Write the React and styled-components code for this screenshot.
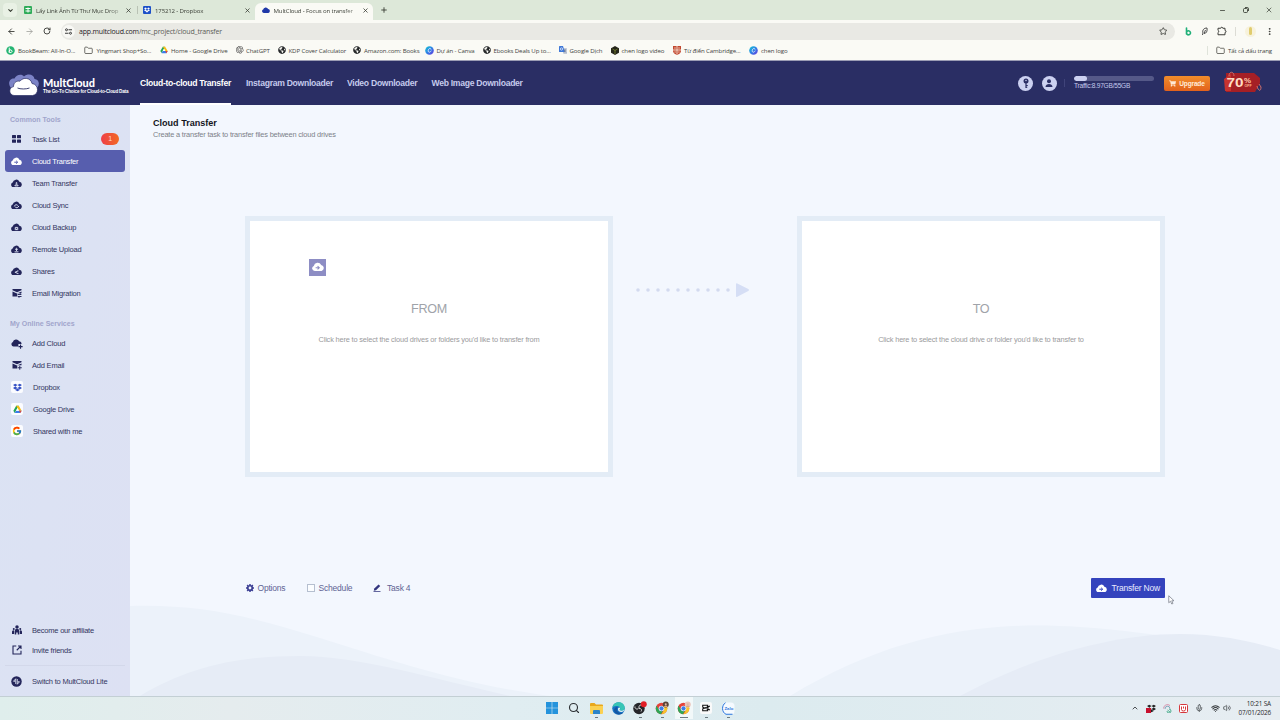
import React from "react";
import styled, { createGlobalStyle } from "styled-components";
import {
    ArrowLeft,
    ArrowRight,
    ChevronDown,
    ChevronUp,
    Folder,
    Mic,
    Minus,
    Plus,
    RotateCw,
    Search,
    Star,
    Volume2,
    Wifi,
    X,
    EllipsisVertical,
} from "lucide-react";
import { FaDropbox, FaGlobeAmericas, FaShoppingCart } from "react-icons/fa";
import { FcGoogle } from "react-icons/fc";
import { SiOpenai } from "react-icons/si";

const ui = `"Open Sans", "Noto Sans", sans-serif`;
const arial = `"Liberation Sans", Arial, sans-serif`;

/* ---------- small drawings ---------- */

const Drive = ({ size = 8 }) => (
    <svg width={size} height={size} viewBox="0 0 24 24">
        <path d="M8.5 2h7L12 8.2 4.6 21 1 15z" fill="#23a55a" />
        <path d="M8.5 2h7L23 15h-7z" fill="#f9bc15" />
        <path d="M8.2 15H23l-3.6 6.5H4.6z" fill="#3b7de9" />
        <path d="M16 15h7l-3.6 6.5z" fill="#e5453a" />
        <path d="M12 8.2 8.2 15h7.8z" fill="#fff" />
    </svg>
);

const Canva = () => (
    <svg width="9" height="9" viewBox="0 0 18 18">
        <defs>
            <linearGradient id="canva" x1="0" y1="0" x2="1" y2="1">
                <stop offset="0" stopColor="#13c9d3" />
                <stop offset=".5" stopColor="#2f80e6" />
                <stop offset="1" stopColor="#6a35dd" />
            </linearGradient>
        </defs>
        <circle cx="9" cy="9" r="8.6" fill="url(#canva)" />
        <path
            d="M12 6.3c-.3-2-3.2-2.1-4.7.2-1.6 2.5-1.1 5.7 1.1 5.9 1.7.1 2.9-1 3.7-2.4"
            fill="none"
            stroke="#fff"
            strokeWidth="1.5"
            strokeLinecap="round"
        />
    </svg>
);

const Beam = () => (
    <svg width="9" height="9" viewBox="0 0 18 18">
        <circle cx="9" cy="9" r="8.5" fill="#25b573" />
        <path
            d="M6.5 4v9M6.5 9.5a2.8 2.8 0 1 1 0 2"
            fill="none"
            stroke="#fff"
            strokeWidth="2"
            strokeLinecap="round"
        />
    </svg>
);

const BeamMark = () => (
    <svg width="7" height="9" viewBox="0 0 14 18">
        <path
            d="M3 2v12M3 11.5a4 4 0 1 1 1 2.8"
            fill="none"
            stroke="#20b078"
            strokeWidth="3.2"
            strokeLinecap="round"
        />
    </svg>
);

const Puzzle = () => (
    <svg width="10" height="10" viewBox="0 0 20 20" fill="none" stroke="#3c3d39" strokeWidth="2">
        <path d="M2 4.5h5.5a2 2 0 0 1 4 0H16V9a2 2 0 0 1 0 4v4.5H2V13a2.3 2.3 0 0 0 0-4.3z" />
    </svg>
);

const Restore = () => (
    <svg width="6" height="6" viewBox="0 0 12 12" fill="none" stroke="#33382f" strokeWidth="1.7">
        <rect x="1" y="3" width="8" height="8" rx="2" />
        <path d="M4 1h4.5Q11 1 11 3.5V8" />
    </svg>
);

const Translate = () => (
    <svg width="8" height="8" viewBox="0 0 16 16">
        <path d="M6 4h9a1 1 0 0 1 1 1v10a1 1 0 0 1-1 1H9z" fill="#c4cbd8" />
        <path d="M1 0h7l3.5 12H1a1 1 0 0 1-1-1V1a1 1 0 0 1 1-1z" fill="#3f78d8" />
        <circle cx="5" cy="6" r="2.3" fill="none" stroke="#fff" strokeWidth="1.3" />
        <path d="M10 8h4M12 7v1c0 2-1 4-2 5M11 9l3 4" stroke="#55657f" fill="none" />
    </svg>
);

const Cube = () => (
    <svg width="8" height="9" viewBox="0 0 16 18">
        <path d="M8 0l8 4.5v9L8 18l-8-4.5v-9z" fill="#26261a" />
        <path d="M8 9v7M8 9L3 6M8 9l5-3" stroke="#7f8c32" strokeWidth="1.5" />
    </svg>
);

const Shield = () => (
    <svg width="8" height="9" viewBox="0 0 16 18">
        <path d="M0 0h16v10c0 4-4 6.5-8 8-4-1.5-8-4-8-8z" fill="#c2472f" />
        <path
            d="M8 0v17M0 8h16M2.5 4h3M10.5 4h3M3 12h2.5M10.5 12H13"
            stroke="#f3ddd0"
            strokeWidth="1.9"
        />
    </svg>
);

const cloudPath = "M4.6 15A4.4 4.4 0 0 1 3 6.5 6.5 6.5 0 0 1 15.3 4.9 5.2 5.2 0 0 1 16 15z";

const cloudGlyphs = {
    arrow: <path d="M6 9.5h6M9.3 6.8l2.8 2.7-2.8 2.7" />,
    team: (
        <>
            <circle cx="10" cy="7.5" r="1" />
            <path d="M7 12.5c0-3 6-3 6 0z" />
        </>
    ),
    sync: <path d="M6 10c.5-3.5 4.3-4 6.3-2M14 9c-.5 3.5-4.3 4-6.3 2" />,
    backup: <path d="M7.8 13V8h4.4v5M10 13v-2.5" />,
    upload: <path d="M10 10.8V6.5M7.5 8.4L10 6l2.500 2.400M6.500 12.500h7" />,
    share: <path d="M12.5 7.2L7.8 9.6l4.7 2.3M7 9.600h1.500M12 7.200h1.500M12 12h1.500" />,
};

const CloudIcon = ({ glyph, color = "#23255a", hole = "#dde2f3", size = 11 }) => (
    <svg width={size} height={size * 0.8} viewBox="0 0 20 16">
        <path d={cloudPath} fill={color} />
        <g fill="none" stroke={hole} strokeWidth="1.8">
            {cloudGlyphs[glyph]}
        </g>
    </svg>
);

const GridIcon = () => (
    <svg width="9" height="8" viewBox="0 0 18 16" fill="#23255a">
        <rect width="8" height="6.6" rx="1" />
        <rect x="10" width="8" height="6.6" rx="1" />
        <rect y="8.8" width="8" height="6.6" rx="1" />
        <rect x="10" y="8.8" width="8" height="6.6" rx="1" />
    </svg>
);

const AddCloudIcon = () => (
    <svg width="12" height="11" viewBox="0 0 22 20">
        <path
            d="M4.6 15.5A4.2 4.2 0 0 1 3.4 7.4 6.2 6.2 0 0 1 15 6a5 5 0 0 1 4.5 5h-6v4.5z"
            fill="#23255a"
        />
        <path d="M17.5 12v7.5M13.8 15.8h7.5" stroke="#23255a" strokeWidth="2" />
    </svg>
);

const MailIcon = ({ plus }) => (
    <svg width="10" height="10" viewBox="0 0 20 20">
        <path d="M1 2h18v2.500L10 8.500 1 4.500zM1 6.800l9 4 9-4v3.500h-8.500v6.500H1z" fill="#23255a" />
        <path
            d={plus ? "M15.5 11.500v8M11.500 15.500h8" : "M11.500 13H18M12 17h7M16 10.500l2.500 2.500M14.500 19.500L12 17"}
            stroke="#23255a"
            strokeWidth="1.9"
        />
    </svg>
);

const PeopleIcon = () => (
    <svg width="10" height="10" viewBox="0 0 20 20" fill="#23255a">
        <circle cx="10" cy="4" r="3.5" />
        <circle cx="3.5" cy="7.8" r="2" />
        <circle cx="16.5" cy="7.8" r="2" />
        <path d="M5.5 19v-7a4.500 4.500 0 0 1 9 0v7h-3v-4h-3v4zM0 18v-4.500a3 3 0 0 1 4.300-2.600V18zM20 18v-4.500a3 3 0 0 0-4.300-2.600V18z" />
    </svg>
);

const InviteIcon = () => (
    <svg width="10" height="10" viewBox="0 0 20 20" fill="none" stroke="#23255a" strokeWidth="2.2">
        <path d="M8.5 2H2v16h16v-6.5M12 2h6v6M18 2L9.5 10.5" />
    </svg>
);

const SwitchIcon = () => (
    <svg width="11" height="11" viewBox="0 0 22 22">
        <circle cx="11" cy="11" r="10.5" fill="#23255a" />
        <path
            d="M9.5 16V5.5L5 10.5h3.5M12.5 6v10.5l4.500-5h-3.500"
            fill="none"
            stroke="#dde2f3"
            strokeWidth="1.8"
        />
    </svg>
);

const Logo = () => (
    <svg width="32" height="23" viewBox="0 0 32 23">
        <path
            d="M3 14C-1 9 2 4 6.5 4.5 8 .5 14-.5 16 2.5 20-1 26 .5 26.5 5c4.5.5 5.5 5 3 8.5z"
            fill="#7c83c6"
        />
        <path
            d="M6 21.5C.5 21 .5 13.5 5.5 12.6 5.5 8 9.5 6.5 12 7.2c3-4.500 11-3.500 12 2.300 7 .8 7.500 11.300.5 12z"
            fill="#fff"
            stroke="#2a2e64"
            strokeWidth=".7"
        />
        <path d="M9.5 14c2.5 1.3 9 1.3 12 0" stroke="#2a2e64" strokeWidth=".9" fill="none" />
    </svg>
);

const SaleTag = () => (
    <svg width="40" height="24" viewBox="0 0 40 24">
        <path d="M3 2h28l6 5v5l-5 9H3z" fill="#a51f25" />
        <path d="M1 8l7-5v17H2z" fill="#c7332f" />
        <path d="M6 5c0-5 5-5 5 0M34 15c1 5 4 6 4 1l-2-3" fill="none" stroke="#cf706c" />
        <text
            x="3.5"
            y="16"
            fontFamily="Liberation Sans"
            fontWeight="700"
            fontSize="13.5"
            textLength="17"
            lengthAdjust="spacingAndGlyphs"
            fill="#ffdcc4"
        >
            70
        </text>
        <text x="21" y="11.5" fontFamily="Liberation Sans" fontWeight="700" fontSize="8" fill="#ffc9a8">
            %
        </text>
        <text x="21.5" y="16" fontFamily="Liberation Sans" fontWeight="700" fontSize="3.6" fill="#ffb98f">
            OFF
        </text>
    </svg>
);

const Chrome = ({ head }) => (
    <svg width="14" height="14" viewBox="0 0 28 28">
        <circle cx="13" cy="15" r="11.5" fill="#e5423a" />
        <path d="M3 9.5a11.5 11.5 0 0 0 9 17l5-9-8.5.5z" fill="#2fa556" />
        <path d="M13 26.5A11.5 11.5 0 0 0 23.5 10H13l5 8z" fill="#f7c52a" />
        <circle cx="13" cy="15" r="5.6" fill="#fff" />
        <circle cx="13" cy="15" r="4.3" fill="#3d7ee6" />
        <circle cx="21.5" cy="7" r="6" fill={head} />
        <path d="M18 12c0-4 7-4 7 0z" fill="#d6a88b" />
        <circle cx="21.5" cy="6.5" r="2" fill="#dfb9a0" />
    </svg>
);

const Pointer = styled.svg`
    position: absolute;
    left: 1168px;
    top: 595px;
`;

/* ---------- browser chrome ---------- */

const bookmarks = [
    { w: 78, icon: <Beam />, label: "BookBeam: All-In-O..." },
    { w: 76, gap: 3.5, icon: <Folder size={9} color="#44443f" />, label: "Yingmart Shop+So..." },
    { w: 76, icon: <Drive />, label: "Home - Google Drive" },
    { w: 42, gap: 2.5, icon: <SiOpenai size={7.5} color="#444" />, label: "ChatGPT" },
    { w: 75, gap: 2.5, icon: <FaGlobeAmericas size={8} color="#26282a" />, label: "KDP Cover Calculator" },
    { w: 72, icon: <FaGlobeAmericas size={8} color="#26282a" />, label: "Amazon.com: Books" },
    { w: 57.5, gap: 2.5, icon: <Canva />, label: "Dự án - Canva" },
    { w: 76, icon: <FaGlobeAmericas size={8} color="#26282a" />, label: "Ebooks Deals Up to..." },
    { w: 52, icon: <Translate />, label: "Google Dịch" },
    { w: 62.5, icon: <Cube />, label: "chen logo video" },
    { w: 76, icon: <Shield />, label: "Từ điển Cambridge..." },
    { w: 60, icon: <Canva />, label: "chen logo" },
];

function Browser() {
    return (
        <header>
            <TabStrip>
                <TabSearch>
                    <ChevronDown size={7} strokeWidth={3.5} />
                </TabSearch>
                <Tab $w={119}>
                    <svg width="8" height="8" viewBox="0 0 16 16">
                        <rect width="16" height="16" rx="2" fill="#2eab58" />
                        <path d="M3 5h10M3 10h10M8 3v10" stroke="#fff" strokeWidth="2" />
                    </svg>
                    <TabTitle>Lấy Link Ảnh Từ Thư Mục Drop</TabTitle>
                    <X size={7} strokeWidth={2.6} />
                </Tab>
                <Tab $w={119} $line>
                    <DropboxTile>
                        <FaDropbox size={6} />
                    </DropboxTile>
                    <TabTitle>175212 - Dropbox</TabTitle>
                    <X size={7} strokeWidth={2.6} />
                </Tab>
                <Tab $w={118} $active>
                    <svg width="8" height="6" viewBox="0 0 20 15">
                        <path d={cloudPath} fill="#2038a8" />
                    </svg>
                    <TabTitle>MultCloud - Focus on transfer</TabTitle>
                    <X size={7} strokeWidth={2.6} />
                </Tab>
                <NewTab>
                    <Plus size={8} strokeWidth={2.6} />
                </NewTab>
                <WindowButtons>
                    <Minus size={7} strokeWidth={2.6} />
                    <Restore />
                    <X size={8} />
                </WindowButtons>
            </TabStrip>
            <Toolbar>
                <ToolSlot $w={22}>
                    <ArrowLeft size={9} strokeWidth={2.4} />
                </ToolSlot>
                <ToolSlot $w={14} $dim>
                    <ArrowRight size={9} />
                </ToolSlot>
                <ToolSlot $w={22}>
                    <RotateCw size={8} strokeWidth={2.8} />
                </ToolSlot>
                <Address>
                    <SiteInfo>
                        <svg width="7" height="7" viewBox="0 0 14 14" fill="none" stroke="#333" strokeWidth="1.9">
                            <circle cx="3" cy="3.5" r="2" />
                            <path d="M7 3.5h7M0 10.5h7" />
                            <circle cx="11" cy="10.5" r="2" />
                        </svg>
                    </SiteInfo>
                    <Url>
                        <b>app.multcloud.com</b>/mc_project/cloud_transfer
                    </Url>
                    <Star size={8.5} strokeWidth={2.4} />
                </Address>
                <Extensions>
                    <BeamMark />
                    <svg width="7" height="9" viewBox="0 0 14 18" fill="none" stroke="#444" strokeWidth="1.9">
                        <path d="M3 16c0-2 .5-3 1-4-2-6 2-10 8-10 1 6-1 11-6 11l3-7" />
                    </svg>
                    <Puzzle />
                    <Divider $h={9} />
                    <Avatar>
                        <i />
                    </Avatar>
                    <EllipsisVertical size={9} strokeWidth={2.6} />
                </Extensions>
            </Toolbar>
            <Bookmarks>
                {bookmarks.map((b, i) => (
                    <Bookmark key={i} $w={b.w} $gap={b.gap}>
                        {b.icon}
                        <span>{b.label}</span>
                    </Bookmark>
                ))}
                <AllBookmarks>
                    <Folder size={9} color="#44443f" />
                    <span>Tất cả dấu trang</span>
                </AllBookmarks>
            </Bookmarks>
        </header>
    );
}

/* ---------- MultCloud ---------- */

function TopNav() {
    return (
        <Nav>
            <Brand>
                <Logo />
                <div>
                    <h1>MultCloud</h1>
                    <p>The Go-To Choice for Cloud-to-Cloud Data</p>
                </div>
            </Brand>
            <NavLink $w={91} $active>
                Cloud-to-cloud Transfer
            </NavLink>
            <NavLink $w={86}>Instagram Downloader</NavLink>
            <NavLink $w={69.5}>Video Downloader</NavLink>
            <NavLink $w={91}>Web Image Downloader</NavLink>
            <NavRight>
                <RoundButton>
                    <svg width="8" height="11" viewBox="0 0 16 22">
                        <circle cx="8" cy="6" r="5" fill="#2a2e64" />
                        <path d="M8 9v11M8 15h3.5M8 18.5h2.5" stroke="#2a2e64" strokeWidth="2.4" />
                        <circle cx="8" cy="4.8" r="1.5" fill="#ccd1f1" />
                    </svg>
                </RoundButton>
                <RoundButton>
                    <svg width="8" height="9" viewBox="0 0 16 18" fill="#2a2e64">
                        <circle cx="8" cy="4.5" r="4" />
                        <path d="M1 16c0-8 14-8 14 0z" />
                    </svg>
                </RoundButton>
                <Traffic>
                    <Bar>
                        <div style={{ width: `${(8.97 / 55) * 100}%` }} />
                    </Bar>
                    <span>Traffic:8.97GB/55GB</span>
                </Traffic>
                <Upgrade>
                    <FaShoppingCart size={7} />
                    Upgrade
                </Upgrade>
                <SaleTag />
            </NavRight>
        </Nav>
    );
}

const tools = [
    { icon: <GridIcon />, label: "Task List", badge: 1 },
    { icon: <CloudIcon glyph="arrow" color="#fff" hole="#575eae" />, label: "Cloud Transfer", active: true },
    { icon: <CloudIcon glyph="team" />, label: "Team Transfer" },
    { icon: <CloudIcon glyph="sync" />, label: "Cloud Sync" },
    { icon: <CloudIcon glyph="backup" />, label: "Cloud Backup" },
    { icon: <CloudIcon glyph="upload" />, label: "Remote Upload" },
    { icon: <CloudIcon glyph="share" />, label: "Shares" },
    { icon: <MailIcon />, label: "Email Migration" },
];

function Sidebar() {
    return (
        <Side>
            <Group>Common Tools</Group>
            {tools.map((t) => (
                <SideItem key={t.label} $active={t.active}>
                    <IconSlot>{t.icon}</IconSlot>
                    {t.label}
                    {t.badge && <Badge>{t.badge}</Badge>}
                </SideItem>
            ))}
            <Group $second>My Online Services</Group>
            <SideItem>
                <IconSlot>
                    <AddCloudIcon />
                </IconSlot>
                Add Cloud
            </SideItem>
            <SideItem>
                <IconSlot>
                    <MailIcon plus />
                </IconSlot>
                Add Email
            </SideItem>
            <SideItem $service>
                <Tile>
                    <FaDropbox size={9} color="#3450c4" />
                </Tile>
                Dropbox
            </SideItem>
            <SideItem $service>
                <Tile>
                    <Drive size={9} />
                </Tile>
                Google Drive
            </SideItem>
            <SideItem $service>
                <Tile>
                    <FcGoogle size={10} />
                </Tile>
                Shared with me
            </SideItem>
            <SideFoot>
                <SideItem $h={20}>
                    <IconSlot>
                        <PeopleIcon />
                    </IconSlot>
                    Become our affiliate
                </SideItem>
                <SideItem $h={20}>
                    <IconSlot>
                        <InviteIcon />
                    </IconSlot>
                    Invite friends
                </SideItem>
                <hr />
                <SideItem $h={30}>
                    <IconSlot>
                        <SwitchIcon />
                    </IconSlot>
                    Switch to MultCloud Lite
                </SideItem>
            </SideFoot>
        </Side>
    );
}

function Transfer() {
    return (
        <Main>
            <Waves width="1150" height="100" viewBox="0 0 1150 100">
                <path d="M0 10C70 8 120 20 190 42S330 88 420 100H0z" fill="#ecf2fa" />
                <path d="M660 100C760 40 850 24 950 31s150 22 200 32v37z" fill="#ecf2fa" />
                <path d="M10 100C60 70 110 60 170 60s130 22 210 40z" fill="#e6ecf6" />
                <path d="M830 100c70-38 150-62 220-62 40 0 75 8 100 16v46z" fill="#e6ecf6" />
            </Waves>
            <PageTitle>Cloud Transfer</PageTitle>
            <PageSub>Create a transfer task to transfer files between cloud drives</PageSub>
            <Panels>
                <Panel>
                    <h3>FROM</h3>
                    <p>Click here to select the cloud drives or folders you'd like to transfer from</p>
                    <DragIcon>
                        <CloudIcon glyph="arrow" color="#fff" hole="#8d8dc4" size={12} />
                    </DragIcon>
                </Panel>
                <Flow width="113" height="16" viewBox="0 0 113 16">
                    {Array.from({ length: 10 }, (_, i) => (
                        <circle key={i} cx={2 + i * 10} cy="8" r="1.8" fill="#d3daef" />
                    ))}
                    <path d="M100 2.2q0-1.5 1.3-.8l11 5.500q1.400 1 0 2l-11 5.900q-1.300.6-1.300-.8z" fill="#d5def5" />
                </Flow>
                <Panel>
                    <h3>TO</h3>
                    <p>Click here to select the cloud drive or folder you'd like to transfer to</p>
                </Panel>
            </Panels>
            <Actions>
                <Action $w={61}>
                    <svg width="8" height="8" viewBox="0 0 16 16">
                        <circle cx="8" cy="8" r="4.5" fill="none" stroke="#3c3f94" strokeWidth="3.4" />
                        <path
                            d="M8 0v3M8 13v3M0 8h3M13 8h3M2.3 2.3l2 2M11.7 11.7l2 2M2.3 13.7l2-2M11.7 4.3l2-2"
                            stroke="#3c3f94"
                            strokeWidth="3"
                        />
                    </svg>
                    Options
                </Action>
                <Action $w={66}>
                    <Check />
                    Schedule
                </Action>
                <Action $w={60} $gap={6}>
                    <svg width="8" height="8" viewBox="0 0 16 16">
                        <path d="M1.5 13.5l1-4.5L11 .8 14.5 4 6 12.500z" fill="#33357e" />
                        <path d="M1 15h14" stroke="#33357e" strokeWidth="1.5" />
                    </svg>
                    Task 4
                </Action>
                <TransferNow>
                    <CloudIcon glyph="arrow" color="#fff" hole="#3443bd" size={11} />
                    Transfer Now
                </TransferNow>
            </Actions>
        </Main>
    );
}

/* ---------- Windows taskbar ---------- */

function Taskbar() {
    return (
        <Task>
            <Apps>
                <TaskIcon>
                    <svg width="12" height="12" viewBox="0 0 24 24" fill="#2493dc">
                        <path d="M0 0h11.4v11.4H0zM12.6 0H24v11.4H12.6zM0 12.6h11.4V24H0zM12.6 12.6H24V24H12.6z" />
                    </svg>
                </TaskIcon>
                <TaskIcon>
                    <Search size={12} color="#2b2f33" strokeWidth={2.3} />
                </TaskIcon>
                <TaskIcon $open>
                    <svg width="13" height="11" viewBox="0 0 26 22">
                        <path d="M0 2q0-2 2-2h7l3 3h12q2 0 2 2v14H0z" fill="#e9a81c" />
                        <path d="M0 6h26v14q0 2-2 2H2q-2 0-2-2z" fill="#fbd151" />
                        <path d="M6 22v-6q0-2 2-2h10q2 0 2 2v6z" fill="#2a84c9" />
                    </svg>
                </TaskIcon>
                <TaskIcon>
                    <svg width="13" height="13" viewBox="0 0 26 26">
                        <circle cx="13" cy="13" r="12.5" fill="#1673c5" />
                        <path d="M1 11C3-3 25-3 25.5 12c0 6-8 7-10 4 3-5-2-9-7-8-4 0-7 2-7.5 3z" fill="#37c5b5" />
                        <path d="M10 13c-2 7 6 11 13 8-5 6-17 5-19-4 0-5 4-8 8-7-1 .5-2 1.5-2 3z" fill="#1457a3" />
                        <path d="M15 16c3 3 8 1 10-1-1 3-3 5-6 5-5 0-8-3-7-7 1-2 3-3 4-1 .5 2-1 3-1 4z" fill="#e3f1f1" />
                    </svg>
                </TaskIcon>
                <TaskIcon $open>
                    <svg width="14" height="14" viewBox="0 0 28 28">
                        <circle cx="12" cy="15" r="11.5" fill="#25262a" />
                        <path
                            d="M12 14c-1-5 3-7 6-6M12 15c5-1 6 4 4 6M11 15c-4 3-8-1-7-4"
                            stroke="#ddd"
                            strokeWidth="2"
                            fill="none"
                        />
                        <circle cx="21.5" cy="6.5" r="6" fill="#e01e26" />
                    </svg>
                </TaskIcon>
                <TaskIcon $open>
                    <Chrome head="#5b4438" />
                </TaskIcon>
                <TaskIcon $open $current>
                    <Chrome head="#e9c5bb" />
                </TaskIcon>
                <TaskIcon $open>
                    <svg width="12" height="12" viewBox="0 0 22 22">
                        <rect width="22" height="22" rx="4" fill="#fafafa" />
                        <path
                            d="M18 7.5L14 10V6H5v3.5l13 5M18 14.5L14 12v4H5v-3.5l13-5"
                            fill="none"
                            stroke="#111"
                            strokeWidth="2"
                        />
                    </svg>
                </TaskIcon>
                <TaskIcon $open>
                    <svg width="13" height="13" viewBox="0 0 26 26">
                        <rect x="1" y="1" width="24" height="24" rx="7" fill="#f5faff" />
                        <path d="M7 1.5C-1 6-1 21 8 24.5h13" fill="none" stroke="#2774dc" strokeWidth="2" />
                        <text x="5" y="16" fontFamily="Liberation Sans" fontWeight="700" fontSize="8.5" fill="#2774dc">
                            Zalo
                        </text>
                    </svg>
                </TaskIcon>
            </Apps>
            <Tray>
                <TraySlot $w={16}>
                    <ChevronUp size={8} strokeWidth={2.6} />
                </TraySlot>
                <TraySlot $w={16}>
                    <FaDropbox size={9} color="#222" />
                    <TrayBadge />
                </TraySlot>
                <TraySlot $w={16}>
                    <svg width="9" height="9" viewBox="0 0 18 18" fill="none" strokeWidth="2">
                        <path d="M1 9a8 8 0 0 1 13-6" stroke="#d693ad" />
                        <path d="M4 10a5 5 0 0 1 10-1" stroke="#7fa6bb" />
                        <path d="M9 12l5 4M12 10a4 4 0 1 1-4 4" stroke="#4fae91" />
                    </svg>
                </TraySlot>
                <TraySlot $w={17}>
                    <svg width="9" height="9" viewBox="0 0 18 18">
                        <rect x="1" y="1" width="16" height="16" rx="2" fill="#fff" stroke="#d6373c" strokeWidth="2" />
                        <path d="M5 5v6q0 3 4 3t4-3V5M9 5v4" fill="none" stroke="#d6373c" strokeWidth="2" />
                    </svg>
                </TraySlot>
                <TraySlot $w={15}>
                    <Mic size={8.5} />
                </TraySlot>
                <TraySlot $w={16}>
                    <Wifi size={9} strokeWidth={2.8} />
                </TraySlot>
                <TraySlot $w={8}>
                    <Volume2 size={8} />
                </TraySlot>
                <Clock>
                    10:21 SA
                    <br />
                    07/01/2026
                </Clock>
            </Tray>
        </Task>
    );
}

export default function App() {
    return (
        <Screen>
            <Global />
            <Browser />
            <TopNav />
            <Body>
                <Sidebar />
                <Transfer />
            </Body>
            <Taskbar />
            <Pointer width="7" height="10" viewBox="0 0 14 20">
                <path
                    d="M1.5 1.5v14l3.5-3 2.5 5.5 2.5-1-2.5-5.5H12z"
                    fill="#fff"
                    stroke="#777c88"
                    strokeWidth="1.5"
                />
            </Pointer>
        </Screen>
    );
}

const Global = createGlobalStyle`
    * {
        box-sizing: border-box;
    }
    body {
        margin: 0;
        overflow: hidden;
    }
    svg {
        display: block;
        flex-shrink: 0;
    }
    h1, h2, h3, p {
        margin: 0;
    }
`;

const Screen = styled.div`
    width: 1280px;
    height: 720px;
    display: flex;
    flex-direction: column;
    position: relative;
    overflow: hidden;
    font-family: ${arial};
    white-space: nowrap;
`;

const TabStrip = styled.div`
    height: 20px;
    display: flex;
    align-items: flex-end;
    padding-left: 3px;
    background: #dde8d9;
    font-family: ${ui};
    color: #33382f;
`;

const TabSearch = styled.div`
    width: 14px;
    height: 14px;
    margin: 0 0 3px;
    display: flex;
    align-items: center;
    justify-content: center;
    border-radius: 4px;
    background: #e9f1e5;
`;

const Tab = styled.div`
    position: relative;
    width: ${(p) => p.$w}px;
    height: 17px;
    display: flex;
    align-items: center;
    padding: 0 0 3px ${(p) => (p.$active ? 6.5 : 7)}px;
    border-radius: 6px 6px 0 0;
    background: ${(p) => (p.$active ? "#fafaf5" : "transparent")};
    font-size: 6.1px;
    letter-spacing: -0.17px;
    &::before {
        content: "";
        display: ${(p) => (p.$line ? "block" : "none")};
        position: absolute;
        left: 1px;
        top: 3px;
        width: 1px;
        height: 8px;
        background: #b9c2b4;
    }
`;

const TabTitle = styled.span`
    width: 88.5px;
    margin-left: 4px;
    color: #3c4038;
    -webkit-mask-image: linear-gradient(to right, #000 80%, rgba(0, 0, 0, 0.25) 96%);
    mask-image: linear-gradient(to right, #000 80%, rgba(0, 0, 0, 0.25) 96%);
`;

const DropboxTile = styled.div`
    width: 8px;
    height: 8px;
    display: flex;
    align-items: center;
    justify-content: center;
    border-radius: 1px;
    background: #1d50c8;
    color: #fff;
`;

const NewTab = styled.div`
    padding: 0 0 6px 7px;
`;

const WindowButtons = styled.div`
    margin-left: auto;
    height: 20px;
    display: flex;
    align-items: center;
    gap: 16.5px;
    padding-right: 7px;
`;

const Toolbar = styled.div`
    height: 22px;
    display: flex;
    align-items: center;
    background: #fafaf5;
    color: #3c3d39;
    font-family: ${ui};
`;

const ToolSlot = styled.div`
    width: ${(p) => p.$w}px;
    display: flex;
    justify-content: center;
    opacity: ${(p) => (p.$dim ? 0.5 : 1)};
`;

const Address = styled.div`
    width: 1114px;
    height: 17px;
    margin-left: 3px;
    display: flex;
    align-items: center;
    padding: 0 8px 0 1px;
    border-radius: 9px;
    background: #e9e9e4;
    > svg {
        margin-left: auto;
    }
`;

const SiteInfo = styled.div`
    width: 13px;
    height: 13px;
    margin-right: 4px;
    display: flex;
    align-items: center;
    justify-content: center;
    border-radius: 50%;
    background: #f8f8f4;
`;

const Url = styled.span`
    font-size: 7px;
    letter-spacing: -0.19px;
    color: #5b5c57;
    b {
        font-weight: 400;
        color: #1f201d;
    }
`;

const Extensions = styled.div`
    flex: 1;
    display: flex;
    align-items: center;
    justify-content: space-between;
    padding: 0 6px 0 10px;
`;

const Divider = styled.div`
    width: 1px;
    height: ${(p) => p.$h}px;
    background: #dcdcd5;
`;

const Avatar = styled.div`
    width: 11px;
    height: 11px;
    display: flex;
    justify-content: center;
    align-items: center;
    border-radius: 50%;
    background: #f7f2dc;
    i {
        width: 3px;
        height: 8px;
        border-radius: 2px;
        background: #e0cc6e;
    }
`;

const Bookmarks = styled.div`
    height: 19px;
    display: flex;
    align-items: center;
    padding: 0 8px 2px 6px;
    background: #fafaf5;
    border-bottom: 1px solid #9b9db4;
    font-family: ${ui};
    font-size: 6.1px;
    letter-spacing: -0.12px;
    color: #44453f;
`;

const Bookmark = styled.div`
    width: ${(p) => p.$w}px;
    display: flex;
    align-items: center;
    gap: ${(p) => p.$gap || 3}px;
`;

const AllBookmarks = styled.div`
    margin-left: auto;
    display: flex;
    align-items: center;
    gap: 3px;
    padding-left: 8px;
    border-left: 1px solid #dfe3da;
`;

const Nav = styled.nav`
    height: 44px;
    display: flex;
    align-items: center;
    background: #2a2e64;
`;

const Brand = styled.div`
    width: 140px;
    display: flex;
    align-items: center;
    gap: 3px;
    padding: 5px 0 0 8px;
    color: #fff;
    h1 {
        font-family: Lato, sans-serif;
        font-size: 10.9px;
        font-weight: 900;
        line-height: 11px;
    }
    p {
        font-size: 4.6px;
        letter-spacing: -0.18px;
        font-weight: 700;
        line-height: 7px;
    }
`;

const NavLink = styled.a`
    width: ${(p) => p.$w}px;
    height: 44px;
    margin-right: 15px;
    padding-top: 2px;
    border-bottom: 2px solid ${(p) => (p.$active ? "#fff" : "transparent")};
    font-size: 8.6px;
    letter-spacing: -0.28px;
    font-weight: 700;
    line-height: 40px;
    color: ${(p) => (p.$active ? "#fff" : "#c5caec")};
`;

const NavRight = styled.div`
    margin-left: auto;
    padding-right: 17px;
    display: flex;
    align-items: center;
`;

const RoundButton = styled.div`
    width: 15px;
    height: 15px;
    margin-right: 8.5px;
    display: flex;
    align-items: center;
    justify-content: center;
    border-radius: 50%;
    background: #ccd1f1;
`;

const Traffic = styled.div`
    position: relative;
    width: 80px;
    margin: 0 10px 0 9px;
    padding-top: 1px;
    font-size: 6.6px;
    letter-spacing: -0.25px;
    line-height: 10px;
    color: #c5caec;
    &::before {
        content: "";
        position: absolute;
        left: -10px;
        top: 4px;
        width: 1px;
        height: 8px;
        background: #40447a;
    }
`;

const Bar = styled.div`
    height: 5.5px;
    border-radius: 3px;
    overflow: hidden;
    background: #555988;
    div {
        height: 100%;
        border-radius: 3px;
        background: #ccd1f1;
    }
`;

const Upgrade = styled.div`
    width: 46px;
    height: 15px;
    margin-right: 13px;
    display: flex;
    align-items: center;
    justify-content: center;
    gap: 3px;
    border-radius: 2px;
    background: linear-gradient(#f18d2b, #e2611c);
    color: #ffead8;
    font-size: 6.6px;
    letter-spacing: -0.2px;
    font-weight: 700;
`;

const Body = styled.div`
    height: 591px;
    display: flex;
`;

const Side = styled.aside`
    width: 130px;
    display: flex;
    flex-direction: column;
    padding: 5px 5px 0;
    background: linear-gradient(100deg, #dbe3f3, #dde1f3);
`;

const Group = styled.div`
    height: ${(p) => (p.$second ? 28 : 18)}px;
    padding: ${(p) => (p.$second ? "10px" : "0")} 0 0 5px;
    font-size: 7.05px;
    font-weight: 700;
    line-height: 19px;
    color: #a1a5cc;
`;

const SideItem = styled.div`
    height: ${(p) => p.$h || 22}px;
    display: flex;
    align-items: center;
    border-radius: 3px;
    gap: ${(p) => (p.$service ? 5 : 4)}px;
    width: 120px;
    font-size: 7.5px;
    letter-spacing: -0.21px;
    background: ${(p) => (p.$active ? "#575eae" : "transparent")};
    color: ${(p) => (p.$active ? "#fff" : "#33365f")};
`;

const IconSlot = styled.div`
    width: 23px;
    display: flex;
    justify-content: center;
`;

const Tile = styled.div`
    width: 12px;
    height: 12px;
    margin: 0 5px 0 6px;
    display: flex;
    align-items: center;
    justify-content: center;
    border-radius: 2px;
    background: #fbfcff;
`;

const Badge = styled.div`
    width: 18px;
    height: 12px;
    margin: 0 6px 0 auto;
    border-radius: 6px;
    background: linear-gradient(90deg, #ee3f49, #f26a22);
    color: #ffdccb;
    font-size: 7px;
    line-height: 12px;
    text-align: center;
`;

const SideFoot = styled.div`
    margin-top: auto;
    hr {
        height: 1px;
        margin: 5px 0 0;
        border: 0;
        background: #d3d8ea;
    }
`;

const Main = styled.main`
    flex: 1;
    position: relative;
    display: flex;
    flex-direction: column;
    padding: 11px 0 0 23px;
    background: #f3f7fe;
`;

const Waves = styled.svg`
    position: absolute;
    left: 0;
    bottom: 0;
`;

const PageTitle = styled.h2`
    font-size: 9.05px;
    line-height: 14px;
    color: #14151c;
`;

const PageSub = styled.p`
    font-size: 7.4px;
    letter-spacing: -0.17px;
    line-height: 10px;
    color: #7c7f88;
`;

const Panels = styled.div`
    margin: 76px 0 0 92px;
    display: flex;
`;

const Panel = styled.section`
    position: relative;
    width: 368px;
    height: 261px;
    padding-top: 79px;
    border: 5px solid #e3ecf6;
    background: #fff;
    text-align: center;
    h3 {
        font-size: 12.6px;
        letter-spacing: -0.3px;
        font-weight: 400;
        line-height: 19px;
        color: #a0a3a9;
    }
    p {
        margin-top: 16px;
        font-size: 7.4px;
        letter-spacing: -0.17px;
        line-height: 10px;
        color: #9a9a9c;
    }
`;

const DragIcon = styled.div`
    position: absolute;
    left: 59px;
    top: 37.5px;
    width: 17px;
    height: 17px;
    display: flex;
    align-items: center;
    justify-content: center;
    background: #8d8dc4;
`;

const Flow = styled.svg`
    margin: 66px 48px 0 23px;
`;

const Actions = styled.div`
    position: relative;
    width: 920px;
    margin: 101px 0 0 92px;
    height: 20px;
    display: flex;
    align-items: center;
    padding-left: 1px;
`;

const Action = styled.div`
    width: ${(p) => p.$w}px;
    display: flex;
    align-items: center;
    gap: ${(p) => p.$gap || 3.5}px;
    font-size: 8.5px;
    letter-spacing: -0.2px;
    color: #5f6494;
`;

const Check = styled.span`
    width: 8px;
    height: 8px;
    border: 1px solid #b5bfd0;
    background: #fbfdff;
`;

const TransferNow = styled.button`
    width: 74px;
    height: 20px;
    margin-left: auto;
    padding: 0;
    display: flex;
    align-items: center;
    justify-content: center;
    gap: 4.5px;
    border: 0;
    border-radius: 1px;
    background: #3443bd;
    color: #e9ebff;
    font-family: ${arial};
    font-size: 8.5px;
    letter-spacing: -0.2px;
`;

const Task = styled.footer`
    height: 24px;
    display: flex;
    justify-content: space-between;
    border-top: 1px solid #c3cfd4;
    background: linear-gradient(90deg, #dfeeec, #e5ecee 18%, #e0edf1 40%, #dcebef 60%, #e7edf2);
    padding-left: 541px;
`;

const Apps = styled.div`
    display: flex;
`;

const TaskIcon = styled.div`
    position: relative;
    width: 22px;
    height: 22px;
    display: flex;
    align-items: center;
    justify-content: center;
    ${(p) =>
        p.$current &&
        "background: linear-gradient(90deg, transparent 2px, #f2f8f9 2px, #f2f8f9 20px, transparent 20px);"}
    &::after {
        content: "";
        display: ${(p) => (p.$open ? "block" : "none")};
        position: absolute;
        bottom: 1px;
        width: ${(p) => (p.$current ? 8 : 3)}px;
        height: 1px;
        background: #6d7a80;
    }
`;

const Tray = styled.div`
    display: flex;
    align-items: center;
    padding: 0 9px 1px 0;
    color: #35393c;
`;

const TraySlot = styled.div`
    position: relative;
    width: ${(p) => p.$w}px;
    display: flex;
    justify-content: center;
`;

const TrayBadge = styled.i`
    position: absolute;
    left: 3px;
    bottom: 0;
    width: 5px;
    height: 5px;
    background: #c8102e;
`;

const Clock = styled.div`
    width: 40px;
    padding-bottom: 1px;
    font-family: ${ui};
    font-size: 6.4px;
    letter-spacing: -0.15px;
    line-height: 9px;
    text-align: right;
    color: #26292b;
`;
